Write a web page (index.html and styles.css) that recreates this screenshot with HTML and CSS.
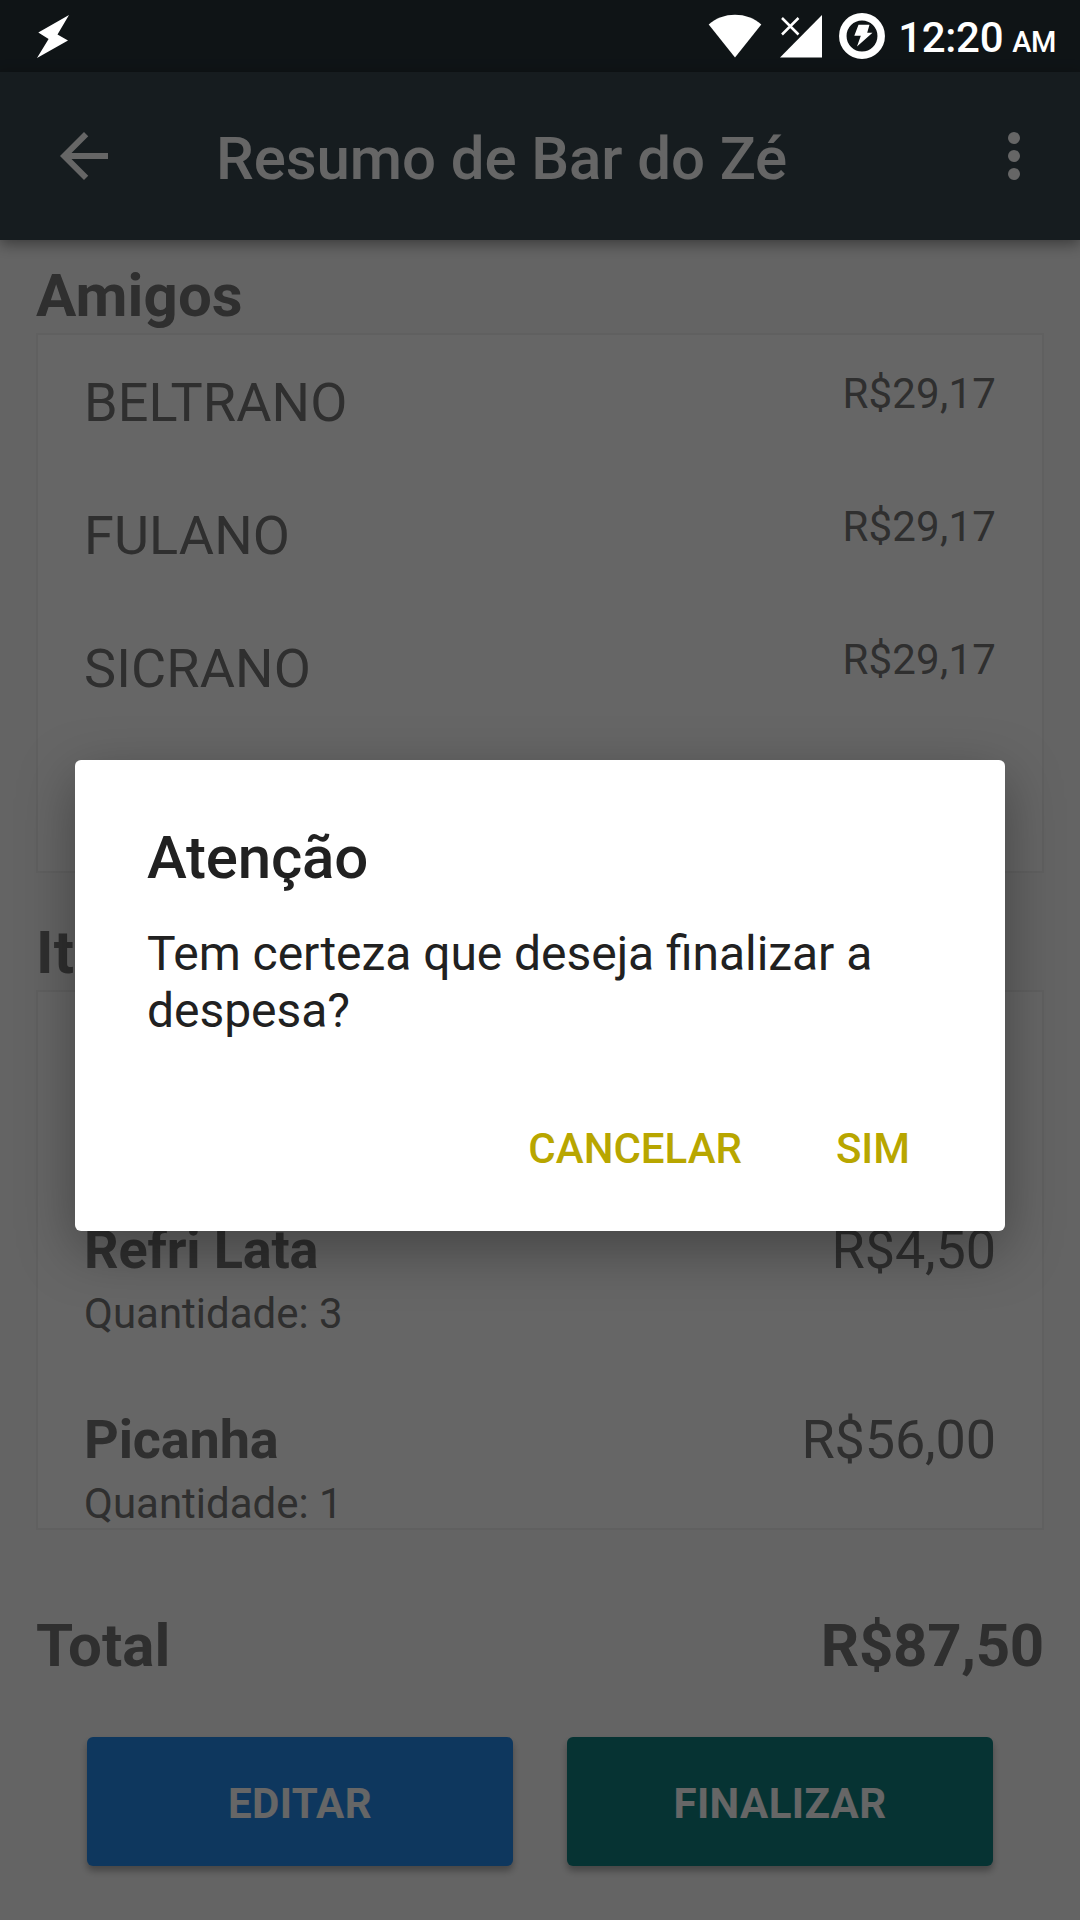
FILE: index.html
```html
<!DOCTYPE html>
<html lang="pt-BR">
<head>
  <meta charset="utf-8">
  <title>Resumo de Bar do Zé</title>
  <link rel="stylesheet" href="styles.css">
</head>
<body>
  <div class="screen">
    <div class="status-space"></div>
    <header class="app-bar">
      <svg class="icon" viewBox="0 0 24 24" aria-hidden="true"><path d="M20 11H7.83l5.59-5.59L12 4l-8 8 8 8 1.41-1.41L7.83 13H20v-2z"/></svg>
      <h1 class="app-title">Resumo de Bar do Zé</h1>
      <svg class="icon" viewBox="0 0 24 24" aria-hidden="true"><circle cx="12" cy="6" r="2"/><circle cx="12" cy="12" r="2"/><circle cx="12" cy="18" r="2"/></svg>
    </header>
    <main class="content">
      <h2 class="heading">Amigos</h2>
      <section class="card friends">
        <div class="friend"><span class="name">BELTRANO</span><span class="share">R$29,17</span></div>
        <div class="friend"><span class="name">FULANO</span><span class="share">R$29,17</span></div>
        <div class="friend"><span class="name">SICRANO</span><span class="share">R$29,17</span></div>
      </section>
      <h2 class="heading heading-items">Itens</h2>
      <section class="card items">
        <div class="item">
          <div><div class="item-name">Refri Lata</div><div class="quantity">Quantidade: 3</div></div>
          <span class="price">R$4,50</span>
        </div>
        <div class="item">
          <div><div class="item-name">Picanha</div><div class="quantity">Quantidade: 1</div></div>
          <span class="price">R$56,00</span>
        </div>
      </section>
      <div class="total"><span>Total</span><span class="total-value">R$87,50</span></div>
      <div class="actions">
        <button class="button edit">EDITAR</button>
        <button class="button finish">FINALIZAR</button>
      </div>
    </main>
  </div>

  <div class="scrim">
    <div class="status-bar">
      <svg class="bolt" width="34" height="46" viewBox="0 0 34 46" aria-hidden="true"><path d="M33 2 2.3 19.5 12.6 26 1 45 32 27.5 21.5 21.5z"/></svg>
      <div class="status-right">
        <svg class="wifi" width="54" height="44" viewBox="0 0 54 44" aria-hidden="true"><path d="M.7 10.5C8 4 17 .7 27 .7S46 4 53.3 10.5L27 43.5z"/></svg>
        <svg class="signal" width="42" height="44" viewBox="0 0 42 44" aria-hidden="true"><path d="M0 43.5H42V1z"/><path class="cross" d="M2 4 18.500 20.500M18.500 4 2 20.500"/></svg>
        <svg class="battery" width="46" height="46" viewBox="0 0 46 46" aria-hidden="true"><circle cx="23" cy="23" r="19.200"/><path d="M19.500 11.800H30.500L28.200 19.800H33.500L18 33.500 21.800 22.800H15.300z"/></svg>
        <span class="clock">12:20</span><span class="period">AM</span>
      </div>
    </div>
    <div class="dialog" role="alertdialog">
      <h2 class="dialog-title">Atenção</h2>
      <p class="message">Tem certeza que deseja finalizar a despesa?</p>
      <div class="dialog-actions"><button class="text-button">CANCELAR</button><button class="text-button">SIM</button></div>
    </div>
  </div>
</body>
</html>
```
FILE: styles.css
```css
* {
  box-sizing: border-box;
}

body {
  position: relative;
  width: 1080px;
  height: 1920px;
  margin: 0;
  overflow: hidden;
  font-family: Roboto, sans-serif;
  color: #757575;
}

h1, h2, p {
  margin: 0;
}

button {
  padding: 0;
  border: 0;
  font-family: inherit;
}

.screen {
  height: 1920px;
  background: #fafafa;
}

.status-space {
  height: 72px;
  background: #263238;
}

.app-bar {
  position: relative;
  display: flex;
  align-items: center;
  height: 168px;
  padding: 0 30px 0 48px;
  background: #37474f;
  color: #fff;
  box-shadow: 0 4px 14px rgba(0, 0, 0, .42);
}

.icon {
  width: 72px;
  height: 72px;
  fill: #fff;
}

.app-title {
  flex: 1;
  padding: 6px 0 0 96px;
  font-size: 60px;
  font-weight: 500;
  line-height: 70px;
  letter-spacing: -.1px;
}

.content {
  padding: 20px 36px 0;
}

.heading {
  height: 73px;
  font-size: 60px;
  font-weight: 700;
  line-height: 72px;
  letter-spacing: .1px;
}

.heading-items {
  margin-top: 44px;
}

.card {
  height: 540px;
  overflow: hidden;
  border: 2px solid #f0f0f0;
  background: #fff;
}

.friends {
  padding: 34px 46px 0;
}

.friend {
  display: flex;
  justify-content: space-between;
  height: 133px;
}

.name {
  padding-top: 2px;
  font-size: 54px;
  line-height: 64px;
  letter-spacing: .12px;
}

.share {
  font-size: 42px;
  line-height: 50px;
  letter-spacing: .2px;
}

.items {
  padding: 226px 46px 0;
}

.item {
  display: flex;
  justify-content: space-between;
  height: 190px;
}

.item-name, .price {
  font-size: 54px;
  line-height: 64px;
  letter-spacing: -.15px;
}

.item-name {
  font-weight: 700;
}

.quantity {
  margin-top: 7px;
  font-size: 42px;
  line-height: 50px;
}

.total {
  display: flex;
  justify-content: space-between;
  margin-top: 80px;
  font-size: 60px;
  font-weight: 700;
  line-height: 72px;
}

.total-value {
  letter-spacing: -.3px;
}

.actions {
  display: flex;
  gap: 54px;
  margin-top: 55px;
  padding: 0 51px;
}

.button {
  flex: 1;
  height: 129px;
  padding-top: 4px;
  border-radius: 6px;
  color: #fff;
  font-size: 42px;
  font-weight: 700;
  letter-spacing: .4px;
  box-shadow: 0 5px 7px rgba(0, 0, 0, .3);
}

.edit {
  background: #258beb;
}

.finish {
  background: #0f8080;
}

.scrim {
  position: absolute;
  inset: 0;
  background: rgba(0, 0, 0, .6);
}

.status-bar {
  display: flex;
  justify-content: space-between;
  height: 72px;
  padding: 13px 24px 0 36px;
  color: #fff;
  fill: #fff;
}

.status-right {
  display: flex;
  align-items: flex-start;
}

.wifi, .signal {
  margin-top: 1px;
}

.signal {
  margin-left: 18px;
}

.cross {
  fill: none;
  stroke: #fff;
  stroke-width: 2.5;
}

.battery {
  margin-left: 17px;
}

.battery circle {
  fill: none;
  stroke: #fff;
  stroke-width: 7.5;
}

.clock {
  margin-left: 13px;
  font-size: 42px;
  font-weight: 500;
  line-height: 50px;
  letter-spacing: -.3px;
}

.period {
  margin-left: 9px;
  padding-top: 4px;
  font-size: 29px;
  font-weight: 500;
  line-height: 50px;
  letter-spacing: -.4px;
}

.dialog {
  width: 930px;
  height: 471px;
  margin: 688px 75px 0;
  padding: 62px 72px 0;
  border-radius: 6px;
  background: #fff;
  color: #212121;
  box-shadow: 0 18px 56px rgba(0, 0, 0, .34);
}

.dialog-title {
  font-size: 60px;
  font-weight: 500;
  line-height: 72px;
  letter-spacing: -.2px;
}

.message {
  margin-top: 31px;
  font-size: 48px;
  line-height: 57px;
  letter-spacing: -.05px;
  font-feature-settings: "liga" 1;
}

.dialog-actions {
  display: flex;
  justify-content: flex-end;
  gap: 94px;
  margin-top: 85px;
  padding-right: 23px;
}

.text-button {
  background: none;
  color: #b8a600;
  font-size: 42px;
  font-weight: 500;
  line-height: 50px;
}
```
